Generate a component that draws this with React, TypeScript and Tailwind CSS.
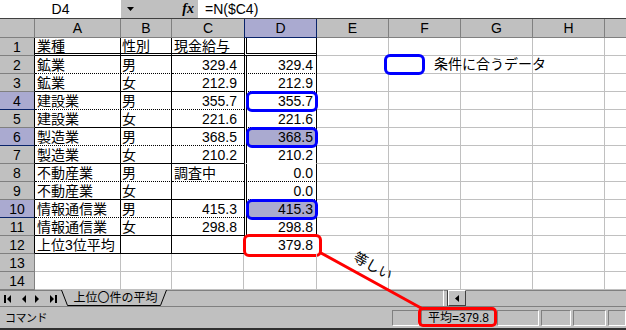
import React from 'react';

type R = { n: number; a: string; b: string; c: string; cNum: boolean; d: string };

const data: R[] = [
  { n: 1, a: '業種', b: '性別', c: '現金給与', cNum: false, d: '' },
  { n: 2, a: '鉱業', b: '男', c: '329.4', cNum: true, d: '329.4' },
  { n: 3, a: '鉱業', b: '女', c: '212.9', cNum: true, d: '212.9' },
  { n: 4, a: '建設業', b: '男', c: '355.7', cNum: true, d: '355.7' },
  { n: 5, a: '建設業', b: '女', c: '221.6', cNum: true, d: '221.6' },
  { n: 6, a: '製造業', b: '男', c: '368.5', cNum: true, d: '368.5' },
  { n: 7, a: '製造業', b: '女', c: '210.2', cNum: true, d: '210.2' },
  { n: 8, a: '不動産業', b: '男', c: '調査中', cNum: false, d: '0.0' },
  { n: 9, a: '不動産業', b: '女', c: '', cNum: false, d: '0.0' },
  { n: 10, a: '情報通信業', b: '男', c: '415.3', cNum: true, d: '415.3' },
  { n: 11, a: '情報通信業', b: '女', c: '298.8', cNum: true, d: '298.8' },
  { n: 12, a: '上位3位平均', b: '', c: '', cNum: false, d: '379.8' },
  { n: 13, a: '', b: '', c: '', cNum: false, d: '' },
  { n: 14, a: '', b: '', c: '', cNum: false, d: '' },
];

const selectedRows = [4, 6, 10];

function abcBottom(n: number): string {
  if (n === 1) return 'border-b-[3px] border-b-black [border-bottom-style:double]';
  if (n >= 13) return 'border-b border-b-[#c0c0c0]';
  if (n === 12 || n % 2 === 1) return 'border-b border-b-black';
  return 'border-b border-b-black [border-bottom-style:dotted]';
}

function sideBorder(n: number): string {
  return n <= 12 ? 'border-r border-r-black' : 'border-r border-r-[#c0c0c0]';
}

function dClass(n: number): string {
  let b: string;
  if (n === 1) b = 'border-b-[3px] border-b-black [border-bottom-style:double]';
  else if (n === 12) b = 'border-b border-b-black';
  else if (n >= 13) b = 'border-b border-b-[#c0c0c0]';
  else if (n === 7) b = 'border-b border-b-white';
  else b = 'border-b border-b-black [border-bottom-style:dotted]';
  const side =
    n <= 12
      ? 'border-l-[3px] border-l-black [border-left-style:double] border-r border-r-black'
      : 'border-r border-r-[#c0c0c0]';
  return `${b} ${side}`;
}

function rowHeaderClass(n: number): string {
  const sel = selectedRows.includes(n);
  const right = n <= 12 ? 'border-r-black' : 'border-r-[#808080]';
  const bg = sel ? 'bg-[#aaaad0] border-b-[#0a246a]' : 'bg-[#c0c0c0] border-b-[#808080]';
  return `${right} ${bg}`;
}

const gridCell = 'h-full w-[72px] border-r border-b border-r-[#c0c0c0] border-b-[#c0c0c0]';

function Row({ r }: { r: R }) {
  const n = r.n;
  return (
    <div className="flex h-[18px]">
      <div className={`flex h-full w-[35px] items-center justify-center border-r border-b ${rowHeaderClass(n)}`}>
        <span className="leading-[16px]">{n}</span>
      </div>
      <div className={`flex h-full w-[86px] items-center pl-[2px] whitespace-nowrap ${sideBorder(n)} ${abcBottom(n)}`}>
        <span className="leading-[16px]">{r.a}</span>
      </div>
      <div className={`flex h-full w-[51px] items-center pl-[1px] whitespace-nowrap ${sideBorder(n)} ${abcBottom(n)}`}>
        <span className="leading-[16px]">{r.b}</span>
      </div>
      <div
        className={`flex h-full w-[72px] items-center whitespace-nowrap ${
          r.cNum ? 'justify-end pr-[7px]' : 'pl-[2px]'
        } ${n >= 13 ? 'border-r border-r-[#c0c0c0]' : ''} ${abcBottom(n)}`}
      >
        <span className="leading-[16px]">{r.c}</span>
      </div>
      <div className={`relative flex h-full w-[73px] items-center justify-end pr-[3px] ${dClass(n)}`}>
        {n === 4 && (
          <span className="absolute left-[-1px] top-[-1px] h-[21px] w-[72px] rounded-[6px] border-[3px] border-[#0000ff] bg-white" />
        )}
        {(n === 6 || n === 10) && (
          <span className="absolute left-[-1px] top-[-1px] h-[21px] w-[72px] rounded-[6px] border-[3px] border-[#0000ff] bg-[#aaaad0]" />
        )}
        {n === 12 && (
          <span className="absolute left-[-4px] top-[-2px] h-[23px] w-[79px] rounded-[6px] border-[3px] border-[#ff0000] bg-white" />
        )}
        <span className="relative leading-[16px]">{r.d}</span>
      </div>
      <div className={gridCell} />
      <div className={gridCell} />
      <div className={gridCell} />
      <div className={gridCell} />
      <div className="h-full flex-1 border-b border-b-[#c0c0c0]" />
    </div>
  );
}

function NavIcon({ kind }: { kind: 'first' | 'prev' | 'next' | 'last' }) {
  if (kind === 'first')
    return (
      <svg width="7" height="8" viewBox="0 0 7 8" className="block">
        <rect x="0" y="0" width="2" height="8" fill="black" />
        <polygon points="7,0 3,4 7,8" fill="black" />
      </svg>
    );
  if (kind === 'prev')
    return (
      <svg width="5" height="8" viewBox="0 0 5 8" className="block">
        <polygon points="5,0 1,4 5,8" fill="black" />
      </svg>
    );
  if (kind === 'next')
    return (
      <svg width="5" height="8" viewBox="0 0 5 8" className="block">
        <polygon points="0,0 4,4 0,8" fill="black" />
      </svg>
    );
  return (
    <svg width="7" height="8" viewBox="0 0 7 8" className="block">
      <polygon points="0,0 4,4 0,8" fill="black" />
      <rect x="5" y="0" width="2" height="8" fill="black" />
    </svg>
  );
}

const panel = 'h-[16px] border border-t-[#808080] border-l-[#808080] border-b-white border-r-white';

export default function App() {
  return (
    <div className="relative h-[330px] w-[626px] overflow-hidden bg-[#c0c0c0] font-['Liberation_Sans','Noto_Sans_CJK_JP',sans-serif] text-[14px] text-black">
      {/* formula bar */}
      <div className="flex h-[19px] border-b border-b-[#404040]">
        <div className="flex h-full w-[121px] items-center justify-center bg-white">
          <span className="leading-[16px]">D4</span>
        </div>
        <div className="flex h-full w-[77px] items-center bg-[#c0c0c0] pl-[6px] pr-[4px]">
          <svg width="7" height="4" viewBox="0 0 7 4" className="block">
            <polygon points="0,0 7,0 3.5,4" fill="black" />
          </svg>
          <span className="ml-auto font-['Liberation_Serif',serif] text-[14px] font-bold italic leading-[16px]">fx</span>
        </div>
        <div className="flex h-full flex-1 items-center bg-white pl-[7px]">
          <span className="leading-[16px]">=N($C4)</span>
        </div>
      </div>

      {/* column headers */}
      <div className="flex h-[19px] bg-[#c0c0c0]">
        <div className="h-full w-[35px] border-r border-b border-[#808080]" />
        <div className="flex h-full w-[86px] items-center justify-center border-r border-b border-[#808080]">A</div>
        <div className="flex h-full w-[51px] items-center justify-center border-r border-b border-[#808080]">B</div>
        <div className="flex h-full w-[72px] items-center justify-center border-b border-[#808080]">C</div>
        <div className="flex h-full w-[73px] items-center justify-center border border-t-0 border-[#0a246a] bg-[#aaaad0]">D</div>
        <div className="flex h-full w-[72px] items-center justify-center border-r border-b border-[#808080]">E</div>
        <div className="flex h-full w-[72px] items-center justify-center border-r border-b border-[#808080]">F</div>
        <div className="flex h-full w-[72px] items-center justify-center border-r border-b border-[#808080]">G</div>
        <div className="flex h-full w-[72px] items-center justify-center border-r border-b border-[#808080]">H</div>
        <div className="h-full flex-1 border-b border-[#808080]" />
      </div>

      {/* grid */}
      <div className="bg-white">
        {data.map((r) => (
          <Row key={r.n} r={r} />
        ))}
      </div>

      {/* sheet tab bar */}
      <div className="flex h-[16px] bg-[#c0c0c0]">
        <div className="flex h-full w-[61px] items-center border-t border-t-[#808080]">
          <span className="ml-[4px]"><NavIcon kind="first" /></span>
          <span className="ml-[10px]"><NavIcon kind="prev" /></span>
          <span className="ml-[9px]"><NavIcon kind="next" /></span>
          <span className="ml-[10px]"><NavIcon kind="last" /></span>
        </div>
        <div className="relative flex h-full w-[106px] items-center justify-center pl-[3px]">
          <svg width="106" height="16" viewBox="0 0 106 16" className="absolute left-0 top-0">
            <polyline points="0.5,0 6.5,15.5 99.5,15.5 105.5,0" fill="none" stroke="black" strokeWidth="1" />
          </svg>
          <span className="relative text-[12px] leading-[12px]">上位〇件の平均</span>
        </div>
        <div className="h-full flex-1 border-t border-t-[#808080]" />
        <div className="h-full w-[5px] border-t border-l border-r border-t-[#808080] border-l-white border-r-[#404040]" />
        <div className="flex h-full w-[18px] items-center justify-center border border-t-white border-l-white border-b-[#404040] border-r-[#404040]">
          <svg width="4" height="7" viewBox="0 0 4 7" className="block">
            <polygon points="4,0 0,3.5 4,7" fill="black" />
          </svg>
        </div>
        <div className="h-full w-[160px] border-t border-t-[#808080]" />
      </div>

      {/* status bar */}
      <div className="flex h-[24px] items-center border-t border-b-2 border-t-[#808080] border-b-[#303030] bg-[#c0c0c0]">
        <span className="pl-[5px] text-[11px] leading-[14px] tracking-[-0.5px]">コマンド</span>
        <div className="ml-auto flex items-center gap-[2px]">
          <div className={`w-[27px] ${panel}`} />
          <div className={`flex w-[74px] items-center pl-[6px] ${panel}`}>
            <span className="text-[12px] leading-[14px]">平均=379.8</span>
          </div>
          <div className={`w-[42px] ${panel}`} />
          <div className={`w-[30px] ${panel}`} />
          <div className={`w-[33px] ${panel}`} />
          <div className={`w-[18px] ${panel}`} />
        </div>
      </div>

      {/* legend */}
      <div className="absolute left-[384px] top-[54px] h-[21px] w-[41px] rounded-[6px] border-[3px] border-[#0000ff] bg-white" />
      <span className="absolute left-[434px] top-[56px] leading-[16px]">条件に合うデータ</span>

      {/* connector line */}
      <svg width="626" height="330" viewBox="0 0 626 330" className="pointer-events-none absolute left-0 top-0">
        <line x1="321" y1="253" x2="421" y2="308" stroke="#ff0000" strokeWidth="3" strokeLinecap="round" />
      </svg>
      <span className="absolute left-[352px] top-[258px] rotate-[29deg] leading-[16px]">等しい</span>

      {/* status highlight */}
      <div className="absolute left-[418px] top-[307px] h-[20px] w-[79px] rounded-[5px] border-[3px] border-[#ff0000]" />
    </div>
  );
}
